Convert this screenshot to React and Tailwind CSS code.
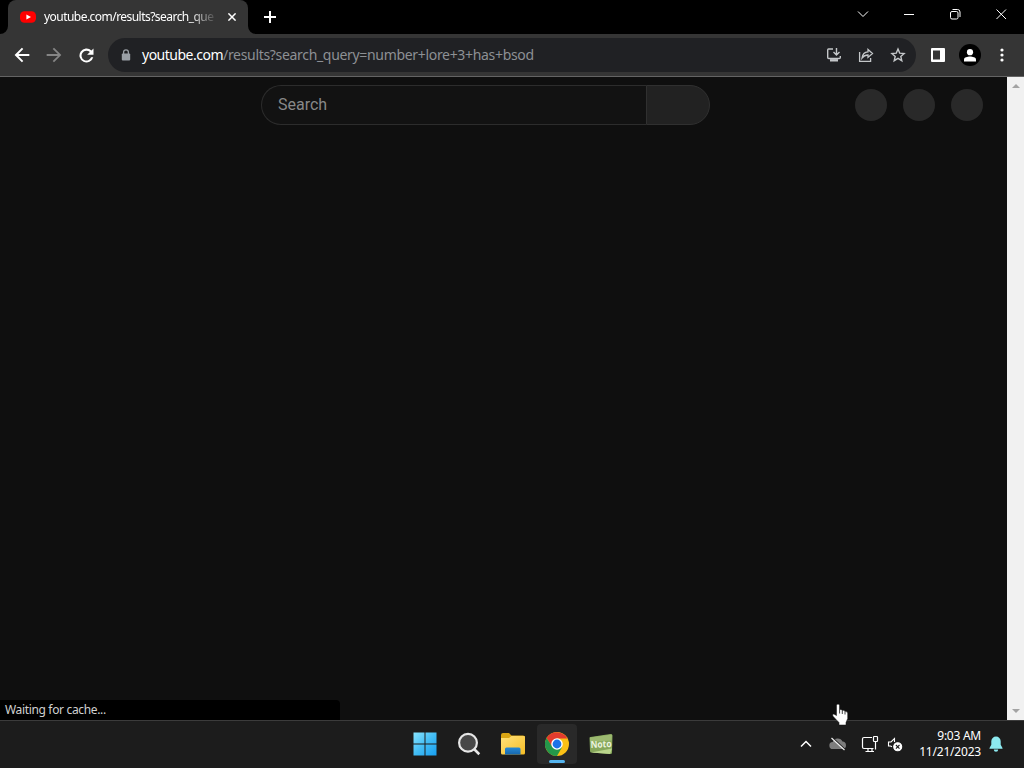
import React from "react";

function Icon({ d, className, box = "0 0 24 24" }) {
  return (
    <svg viewBox={box} className={className} fill="currentColor">
      <path d={d} />
    </svg>
  );
}

function TabStrip() {
  return (
    <div className="flex h-[34px] shrink-0 bg-black">
      <div className="relative ml-2 flex h-full w-60 items-center rounded-t-lg bg-[#353535]">
        <svg viewBox="0 0 8 8" className="absolute -left-2 bottom-0 h-2 w-2">
          <path d="M8 0v8H0a8 8 0 0 0 8-8z" fill="#353535" />
        </svg>
        <svg viewBox="0 0 8 8" className="absolute -right-2 bottom-0 h-2 w-2">
          <path d="M0 0v8h8a8 8 0 0 1-8-8z" fill="#353535" />
        </svg>
        <svg viewBox="0 0 16 12" className="ml-3 h-3 w-4 shrink-0">
          <rect y=".3" width="16" height="11.400" rx="4.500" fill="#f00" />
          <path d="M6.400 3.400v5.200L11 6z" fill="#fff" />
        </svg>
        <div className="ml-2 w-[176px] whitespace-nowrap text-[12px] leading-4 tracking-[-0.54px] text-white [mask-image:linear-gradient(to_right,#000_145px,transparent_174px)]">
          youtube.com/results?search_que
        </div>
        <svg viewBox="0 0 8 8" className="ml-2 h-2 w-2 shrink-0" stroke="#fff" strokeWidth="1.500">
          <path d="M.4.4l7.200 7.200M7.600.4L.4 7.600" />
        </svg>
      </div>
      <svg viewBox="0 0 12 12" className="ml-4 mt-[11px] h-3 w-3" stroke="#fff" strokeWidth="2">
        <path d="M6 0v12M0 6h12" />
      </svg>
      <svg viewBox="-10 0 174 28" className="ml-auto h-7 w-[174px]" fill="none" stroke="#fff" strokeWidth="1">
        <path d="M-2 11.500l5 5 5-5" />
        <path d="M44 14.500h10" />
        <rect x="90.500" y="11.500" width="7.500" height="7.500" rx="1.500" />
        <path d="M92.500 9.500h5a2.500 2.500 0 0 1 2.500 2.500v5" />
        <path d="M136.500 9.500l9.500 9.500M146 9.500l-9.500 9.500" />
      </svg>
    </div>
  );
}

function Toolbar() {
  return (
    <div className="flex h-[43px] shrink-0 items-center border-b border-[#646464] bg-[#353535]">
      <Icon className="ml-[11px] h-[22px] w-[22px] text-white" d="M20 10.800H8.100l5.300-5.300L11.900 4l-8 8 8 8 1.500-1.500-5.300-5.300H20z" />
      <Icon className="ml-[10px] h-[22px] w-[22px] text-[#858585]" d="M4 13h12.200l-5.600 5.600L12 20l8-8-8-8-1.400 1.400 5.600 5.600H4z" />
      <Icon className="ml-[11px] h-[21px] w-[21px] text-white" d="M17.650 6.350A8 8 0 1 0 19.730 14h-2.500A5.600 5.600 0 1 1 15.900 8.100L12.700 11.200H20V4z" />
      <div className="ml-[11px] flex h-[34px] w-[808px] items-center rounded-full bg-[#202124] pl-[13px]">
        <svg viewBox="0 0 10 12" className="h-3 w-[10px]" fill="none">
          <path d="M2.600 5V3.200a2.400 2.400 0 0 1 4.800 0V5" stroke="#9aa0a6" strokeWidth="1.300" />
          <rect x=".8" y="4.400" width="8.400" height="7.200" rx="1" fill="#9aa0a6" />
        </svg>
        <div className="ml-[11px] whitespace-nowrap text-[14px] leading-5 tracking-[-0.32px] text-[#8d9094]">
          <span className="tracking-[-0.5px] text-white">youtube.com</span>/results?search_query=number+lore+3+has+bsod
        </div>
        <div className="ml-auto mr-[10px] flex items-center gap-4 text-[#c4c7c9]">
          <svg viewBox="0 0 16 16" className="h-4 w-4" fill="none" stroke="currentColor" strokeWidth="1.400">
            <path d="M7 2H2.500Q1.700 2 1.700 3v7.500q0 1 1 1h10.600q1 0 1-1V9M10.500 1v6.500M7.500 5l3 3 3-3" />
            <path d="M4 13.300h8" strokeWidth="2.400" />
          </svg>
          <svg viewBox="0 0 16 16" className="h-4 w-4" fill="none" stroke="currentColor" strokeWidth="1.300">
            <path d="M1.600 5v9.300h11V11M4 11c.5-4 2.500-6 6-6.200V2.400l4.500 4-4.500 4V8C7.500 8 5.500 9 4 11z" />
          </svg>
          <svg viewBox="0 0 16 16" className="h-4 w-4" fill="none" stroke="currentColor" strokeWidth="1.400">
            <path d="M8 2l1.700 4.100 4.400.4-3.300 2.900 1 4.300L8 11.400l-3.800 2.300 1-4.300L1.900 6.500l4.400-.4z" />
          </svg>
        </div>
      </div>
      <svg viewBox="0 0 14 14" className="ml-[15px] h-[14px] w-[14px]">
        <rect width="14" height="14" rx="1" fill="#fff" />
        <path d="M2 2.500h7v9H2z" fill="#353535" />
      </svg>
      <div className="ml-[14px] flex h-[22px] w-[22px] items-center justify-center rounded-full bg-black">
        <svg viewBox="0 0 12 13" className="h-[13px] w-3" fill="#fff">
          <circle cx="6" cy="3.200" r="3.100" />
          <path d="M0 12.500v-2c0-2 3.500-2.900 6-2.900s6 .9 6 2.900v2z" />
        </svg>
      </div>
      <svg viewBox="0 0 4 14" className="ml-[19px] h-[14px] w-1" fill="#fff">
        <circle cx="2" cy="2" r="1.600" />
        <circle cx="2" cy="7" r="1.600" />
        <circle cx="2" cy="12" r="1.600" />
      </svg>
    </div>
  );
}

function Page() {
  return (
    <div className="flex min-h-0 flex-1 bg-[#0f0f0f]">
      <div className="flex min-w-0 flex-1 flex-col justify-between">
        <div className="flex h-14 items-center pl-[261px]">
          <div className="flex h-10 w-[385px] items-center rounded-l-full border border-r-0 border-[#2c2c2c] bg-[#121212] pl-4 font-[Roboto,sans-serif] text-[16px] text-[#888]">
            Search
          </div>
          <div className="h-10 w-16 rounded-r-full border border-[#303030] bg-[#222]" />
          <div className="ml-[145px] flex gap-4">
            <div className="h-8 w-8 rounded-full bg-[#292929]" />
            <div className="h-8 w-8 rounded-full bg-[#292929]" />
            <div className="h-8 w-8 rounded-full bg-[#292929]" />
          </div>
        </div>
        <div className="flex h-5 w-[340px] items-center rounded-tr bg-black pl-[5px] text-[12px] leading-4 tracking-[-0.34px] text-[#d0d0d0]">
          Waiting for cache...
        </div>
      </div>
      <div className="flex w-[17px] flex-col items-center justify-between bg-[#f1f1f1] pb-[7px] pt-[7px]">
        <svg viewBox="0 0 8 4" className="h-1 w-2" fill="#a3a3a3"><path d="M0 4l4-4 4 4z" /></svg>
        <svg viewBox="0 0 8 4" className="h-1 w-2" fill="#a3a3a3"><path d="M0 0l4 4 4-4z" /></svg>
      </div>
    </div>
  );
}

function Launchers() {
  return (
    <div className="flex items-center pl-[405px]">
      <div className="flex h-10 w-[39px] items-center justify-center">
        <svg viewBox="0 0 24 24" className="h-6 w-6">
          <defs>
            <linearGradient id="win" x1="0" y1="0" x2="24" y2="24" gradientUnits="userSpaceOnUse">
              <stop stopColor="#8be6ff" />
              <stop offset=".5" stopColor="#43bdf5" />
              <stop offset="1" stopColor="#159df0" />
            </linearGradient>
          </defs>
          <path d="M.5.5h11v11H.5zM12.500.5h11v11h-11zM.5 12.500h11v11H.5zM12.500 12.500h11v11h-11z" fill="url(#win)" />
        </svg>
      </div>
      <div className="ml-[5px] flex h-10 w-10 items-center justify-center">
        <svg viewBox="0 0 24 24" className="h-6 w-6" stroke="#e6e6e6">
          <path d="M17 17l5.300 5.200" strokeWidth="2.600" />
          <circle cx="11" cy="10.700" r="8.900" fill="#474747" strokeWidth="2.200" />
        </svg>
      </div>
      <div className="ml-1 flex h-10 w-10 items-center justify-center">
        <svg viewBox="0 0 26 24" className="h-6 w-[26px]">
          <defs>
            <linearGradient id="folder" x1="0" y1="0" x2="1" y2="1">
              <stop stopColor="#ffe27c" />
              <stop offset="1" stopColor="#f6bd24" />
            </linearGradient>
            <linearGradient id="dock" x1="0" y1="0" x2="0" y2="1">
              <stop stopColor="#2589d6" />
              <stop offset="1" stopColor="#1767ac" />
            </linearGradient>
          </defs>
          <path d="M1 3q0-2 2-2h6l2.500 2.500H23q2 0 2 2V9H1z" fill="#d9a514" />
          <path d="M1 6h8l2.500-2H24q1 0 1 1v16q0 1.500-1.500 1.500h-21Q1 22.500 1 21z" fill="url(#folder)" />
          <path d="M5 22.500V17q0-1.500 1.500-1.500h12.500q1.500 0 1.500 1.500v5.500z" fill="url(#dock)" />
        </svg>
      </div>
      <div className="relative ml-1 flex h-10 w-10 items-center justify-center rounded bg-[#292929]">
        <svg viewBox="0 0 48 48" className="h-6 w-6">
          <circle cx="24" cy="24" r="24" fill="#fbc116" />
          <path d="M24 13h20.800a24 24 0 0 0-41.600-1L14 29.500z" fill="#e33b2e" />
          <path d="M3.200 12a24 24 0 0 0 20.800 36l10-17.500-19.500-1z" fill="#24974a" />
          <circle cx="24" cy="24" r="11.500" fill="#fff" />
          <circle cx="24" cy="24" r="8.800" fill="#1b72e8" />
        </svg>
        <div className="absolute bottom-px h-[3px] w-4 rounded-full bg-[#55b5ef]" />
      </div>
      <div className="ml-1 flex h-10 w-10 items-center justify-center">
        <svg viewBox="0 0 24 24" className="h-6 w-6">
          <path d="M.5 6q0-1 1-1l20-3q2 0 2 1.500L23 20.500q0 1.500-1.500 1.500L2.500 20.500Q1 20.500 1 19z" fill="#86a75b" />
          <path d="M1 5.500L23 2.500l-.5 6L1 10z" fill="#9cb970" />
          <path d="M2 20.500l19 1.500 2-5.500z" fill="#bad58c" />
          <text x="12" y="15.500" transform="rotate(-3 12 12)" textAnchor="middle" fontFamily="Open Sans, sans-serif" fontSize="9.500" fontWeight="700" textLength="21" lengthAdjust="spacingAndGlyphs" fill="#edf4df">Noto</text>
        </svg>
      </div>
    </div>
  );
}

function Taskbar() {
  return (
    <div className="flex h-12 shrink-0 items-center border-t border-[#3b3b3b] bg-[#1c1c1c] pb-px">
      <Launchers />
      <div className="ml-auto flex items-center text-white">
        <svg viewBox="0 0 12 8" className="h-2 w-3" fill="none" stroke="currentColor" strokeWidth="1.500">
          <path d="M1 6.500l5-5 5 5" />
        </svg>
        <svg viewBox="0 0 18 16" className="ml-[17px] h-4 w-[18px]">
          <path d="M4 13a3.500 3.500 0 0 1-.3-7A5.300 5.300 0 0 1 13.500 5.500 3.800 3.800 0 0 1 14 13z" fill="#7d7d7d" />
          <path d="M3.200 1.500l14 13" stroke="#1c1c1c" strokeWidth="1.200" />
          <path d="M2.500 2l13 12" stroke="#eee" strokeWidth="1.200" />
        </svg>
        <svg viewBox="0 0 18 18" className="ml-[14px] h-[18px] w-[18px]" fill="none" stroke="currentColor" strokeWidth="1.200">
          <path d="M11 2.500H3q-1.500 0-1.500 1.500v8q0 1.500 1.500 1.500h9.500M4.500 16.500h8.500M7 13.500v3M11 13.500v3" />
          <rect x="12.500" y="1.500" width="4" height="5" rx=".7" />
          <path d="M14.500 6.500v8" />
        </svg>
        <svg viewBox="0 0 16 16" className="ml-[8px] h-4 w-4" fill="none" stroke="currentColor" strokeWidth="1.100">
          <path d="M5 10.800L3.500 10H1.500V6H4l3.500-3.500V6" />
          <circle cx="10.700" cy="10.800" r="4" fill="#fff" />
          <path d="M8.900 9l3.600 3.600M12.500 9l-3.600 3.600" stroke="#1c1c1c" />
        </svg>
        <div className="ml-4 w-[62px] whitespace-nowrap text-[12px] leading-4">
          <div className="text-right tracking-[-0.25px]">9:03 AM</div>
          <div className="flex justify-end tracking-[-0.2px]">11/21/2023</div>
        </div>
        <svg viewBox="0 0 14 16" className="ml-2 mr-[21px] h-4 w-[14px]" fill="#8deaf0">
          <path d="M7 .5a4.700 4.700 0 0 0-4.700 4.700v3.500L.5 12v.8h13V12l-1.800-3.300V5.200A4.700 4.700 0 0 0 7 .5zM4.800 13.500a2.200 2.200 0 0 0 4.400 0z" />
        </svg>
      </div>
    </div>
  );
}

export default function App() {
  return (
    <div className="relative flex h-[768px] w-[1024px] flex-col overflow-hidden font-['Noto_Sans','Open_Sans',sans-serif]">
      <TabStrip />
      <Toolbar />
      <Page />
      <Taskbar />
      <svg viewBox="0 0 17 23" className="absolute left-[832px] top-[703px] h-[23px] w-[17px]" fill="#fff" stroke="#111" strokeWidth=".5">
        <path d="M4.500 2.500a1.500 1.500 0 0 1 3 0v4q2-.4 2.800 1 1.800-.5 2.600.8 2.800-.2 2.800 2.300v5L14 19.500V22H7v-2.500L4.500 17 .8 13q-.6-1.800 1-2l2.700 1.600z" />
        <path d="M7.600 6.500v4M10.300 7.500v3.500M13 8.500v3" strokeWidth=".8" fill="none" />
      </svg>
    </div>
  );
}
